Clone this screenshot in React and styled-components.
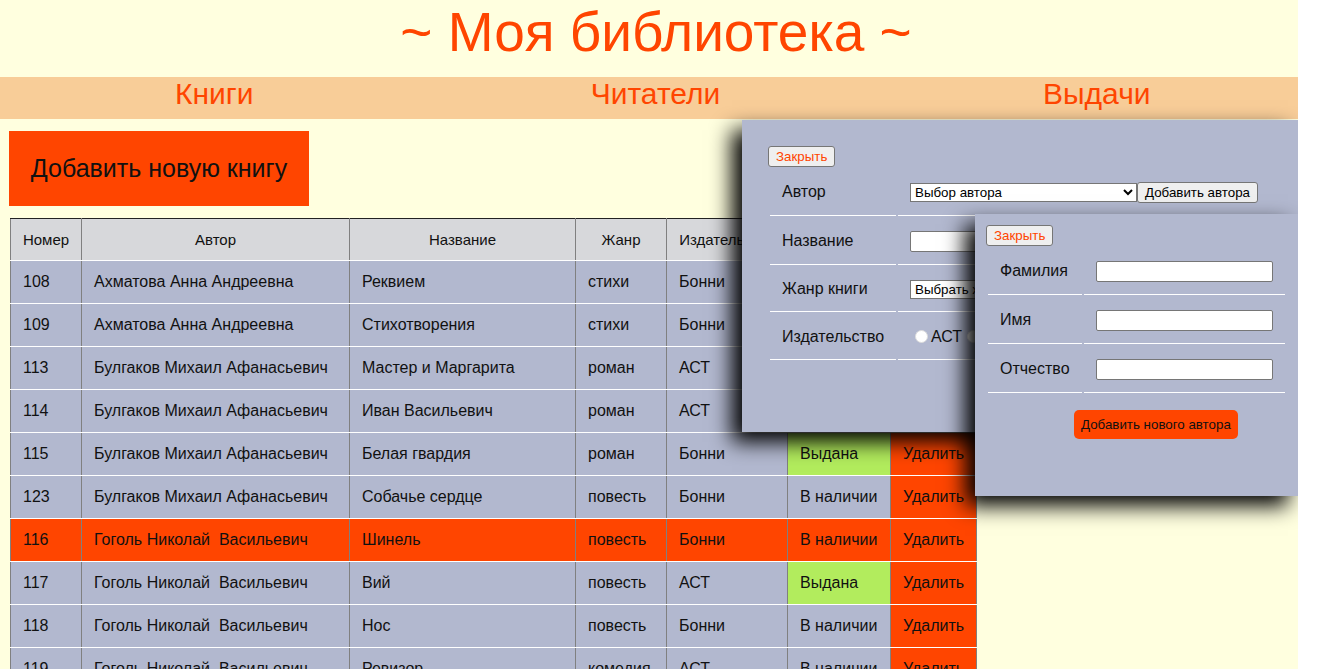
import React from "react";
import styled, { createGlobalStyle } from "styled-components";

const Global = createGlobalStyle`
  body { margin: 0; background: #fff; font-family: "Liberation Sans", Arial, sans-serif; color: #111; }
  button, input, select { font-family: inherit; }
`;

const Page = styled.div`
  position: relative;
  height: calc(100vh - 2px);
  margin-right: 39px;
  overflow: hidden;
  background: #ffffdf;
`;
const Title = styled.h1`
  margin: 0 0 13px;
  padding-left: 14px;
  font-size: 55px;
  line-height: 64px;
  font-weight: 400;
  text-align: center;
  color: orangered;
`;
const Nav = styled.nav`
  display: grid;
  grid-template-columns: 33% 35% 33%;
  justify-items: center;
  padding-bottom: 8px;
  background: #f8cd98;
`;
const NavLink = styled.a`
  font-size: 30px;
  line-height: 34px;
  color: orangered;
  text-decoration: none;
`;
const Main = styled.main`
  padding: 12px 9px 0;
`;
const AddBook = styled.button`
  display: block;
  width: 300px;
  height: 75px;
  margin-bottom: 12px;
  padding: 0;
  border: 0;
  background: orangered;
  font-size: 25px;
  color: #111;
`;
const Table = styled.table`
  width: 966px;
  margin-left: 1px;
  table-layout: fixed;
  border-collapse: collapse;
`;
const Head = styled.th`
  width: ${(p) => p.$w}px;
  height: 42px;
  padding: 0;
  box-sizing: border-box;
  border: 1px solid gray;
  border-top-color: #222;
  border-bottom-color: #fff;
  background: #d7d8db;
  font-size: 15px;
  font-weight: 400;
`;
const tones = { plain: "#b2b8cf", out: "#b2ec5d", danger: "orangered" };
const Cell = styled.td`
  height: 43px;
  padding: 0 12px;
  box-sizing: border-box;
  border: 1px solid gray;
  border-top-color: #fff;
  border-bottom-color: #fff;
  background: ${(p) => tones[p.$tone || "plain"]};
  font-size: 16px;
  white-space: pre;
`;
const Dialog = styled.section`
  position: absolute;
  top: ${(p) => p.$top}px;
  right: 0;
  width: ${(p) => p.$w}px;
  height: ${(p) => p.$h}px;
  padding: ${(p) => p.$pad};
  box-sizing: border-box;
  background: #b2b8cf;
  box-shadow: -10px 10px 20px #000;
`;
const SmallButton = styled.button`
  display: ${(p) => (p.$close ? "block" : "inline-block")};
  height: 21px;
  padding: 0 7px;
  border: 1px solid #767676;
  border-radius: 3px;
  background: #efefef;
  line-height: 19px;
  color: ${(p) => (p.$close ? "orangered" : "#000")};
`;
const Form = styled.form`
  margin-top: 2px;
`;
const Field = styled.div`
  display: grid;
  grid-template-columns: ${(p) => p.$label}px 1fr;
  column-gap: 2px;
  margin: 0 ${(p) => p.$right || 0}px 2px 2px;
`;
const Part = styled.div`
  display: flex;
  align-items: center;
  height: ${(p) => p.$h || 46}px;
  padding-left: 12px;
  border-bottom: 1px solid #fff;
  font-size: 16px;
`;
const TextBox = styled.input`
  width: 177px;
  height: 21px;
  box-sizing: border-box;
  border: 1px solid #767676;
  border-radius: 2px;
  background: #fff;
`;
const Select = styled.select`
  width: ${(p) => p.$w}px;
  height: 19px;
  padding: 0;
  border: 1px solid #767676;
  border-radius: 0;
  background: #fff;
  color: #000;
`;
const Choice = styled.label`
  display: flex;
  align-items: center;
`;
const Radio = styled.input`
  appearance: none;
  width: 13px;
  height: 13px;
  margin: 0 3px 0 5px;
  border: 1px solid #ddd;
  border-radius: 50%;
  background: #fff;
`;
const Submit = styled.button`
  display: block;
  height: 29px;
  margin: 17px 0 0 88px;
  padding: 0 7px;
  border: 0;
  border-radius: 5px;
  background: orangered;
  color: #111;
`;

const columns = [["Номер", 71], ["Автор", 268], ["Название", 226], ["Жанр", 91], ["Издательство", 121], ["Статус", 103], ["", 86]];
const ahm = "Ахматова Анна Андреевна";
const bul = "Булгаков Михаил Афанасьевич";
const gog = "Гоголь Николай  Васильевич";
const books = [
  [108, ahm, "Реквием", "стихи", "Бонни", "В наличии"],
  [109, ahm, "Стихотворения", "стихи", "Бонни", "В наличии"],
  [113, bul, "Мастер и Маргарита", "роман", "АСТ", "В наличии"],
  [114, bul, "Иван Васильевич", "роман", "АСТ", "В наличии"],
  [115, bul, "Белая гвардия", "роман", "Бонни", "Выдана"],
  [123, bul, "Собачье сердце", "повесть", "Бонни", "В наличии"],
  [116, gog, "Шинель", "повесть", "Бонни", "В наличии"],
  [117, gog, "Вий", "повесть", "АСТ", "Выдана"],
  [118, gog, "Нос", "повесть", "Бонни", "В наличии"],
  [119, gog, "Ревизор", "комедия", "АСТ", "В наличии"],
];
const highlighted = 116;

function BookRow({ book }) {
  const active = book[0] === highlighted;
  return (
    <tr>
      {book.map((v, i) => (
        <Cell key={i} $tone={active ? "danger" : v === "Выдана" ? "out" : "plain"}>{v}</Cell>
      ))}
      <Cell $tone="danger">Удалить</Cell>
    </tr>
  );
}

function BookDialog() {
  return (
    <Dialog $top={120} $w={556} $h={312} $pad="26px 26px 0" aria-label="Новая книга">
      <SmallButton $close type="button">Закрыть</SmallButton>
      <Form>
        <Field $label={126}>
          <Part as="label" htmlFor="author">Автор</Part>
          <Part>
            <Select id="author" $w={227}><option>Выбор автора</option></Select>
            <SmallButton type="button">Добавить автора</SmallButton>
          </Part>
        </Field>
        <Field $label={126}>
          <Part as="label" htmlFor="name">Название</Part>
          <Part><TextBox id="name" /></Part>
        </Field>
        <Field $label={126}>
          <Part as="label" htmlFor="genre" $h={44}>Жанр книги</Part>
          <Part $h={44}><Select id="genre" $w={177}><option>Выбрать жанр</option></Select></Part>
        </Field>
        <Field $label={126} role="radiogroup" aria-labelledby="publisher">
          <Part id="publisher" $h={45}>Издательство</Part>
          <Part $h={45}>
            <Choice><Radio type="radio" name="publisher" />АСТ</Choice>
            <Choice><Radio type="radio" name="publisher" />Бонни</Choice>
          </Part>
        </Field>
      </Form>
    </Dialog>
  );
}

function AuthorDialog() {
  const fields = [["surname", "Фамилия"], ["firstname", "Имя"], ["patronymic", "Отчество"]];
  return (
    <Dialog $top={214} $w={323} $h={282} $pad="11px 11px 0" aria-label="Новый автор">
      <SmallButton $close type="button">Закрыть</SmallButton>
      <Form>
        {fields.map(([id, label]) => (
          <Field key={id} $label={94} $right={2}>
            <Part as="label" htmlFor={id}>{label}</Part>
            <Part><TextBox id={id} /></Part>
          </Field>
        ))}
        <Submit type="button">Добавить нового автора</Submit>
      </Form>
    </Dialog>
  );
}

export default function App() {
  return (
    <Page>
      <Global />
      <Title>~ Моя библиотека ~</Title>
      <Nav>
        <NavLink href="#books">Книги</NavLink>
        <NavLink href="#readers">Читатели</NavLink>
        <NavLink href="#loans">Выдачи</NavLink>
      </Nav>
      <Main>
        <AddBook type="button">Добавить новую книгу</AddBook>
        <Table>
          <thead>
            <tr>{columns.map(([t, w], i) => <Head key={i} $w={w}>{t}</Head>)}</tr>
          </thead>
          <tbody>{books.map((b) => <BookRow key={b[0]} book={b} />)}</tbody>
        </Table>
      </Main>
      <BookDialog />
      <AuthorDialog />
    </Page>
  );
}
